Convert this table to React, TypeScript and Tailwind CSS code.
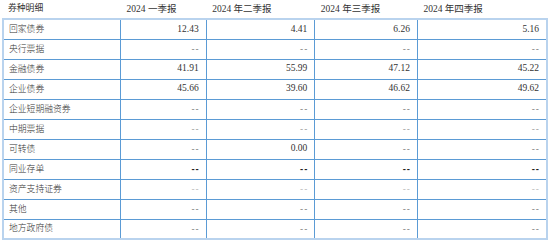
import React from 'react';

type Row = { name: string; vals: string[]; dash?: string };

const rows: Row[] = [
  { name: '回家债券', vals: ['12.43', '4.41', '6.26', '5.16'] },
  { name: '央行票据', vals: ['--', '--', '--', '--'], dash: 'text-[#7a7a7a]' },
  { name: '金融债券', vals: ['41.91', '55.99', '47.12', '45.22'] },
  { name: '企业债券', vals: ['45.66', '39.60', '46.62', '49.62'] },
  { name: '企业短期融资券', vals: ['--', '--', '--', '--'], dash: 'text-[#7a7a7a]' },
  { name: '中期票据', vals: ['--', '--', '--', '--'], dash: 'text-[#9a9a9a]' },
  { name: '可转债', vals: ['--', '0.00', '--', '--'], dash: 'text-[#7a7a7a]' },
  { name: '同业存单', vals: ['--', '--', '--', '--'], dash: 'text-[#222] font-bold' },
  { name: '资产支持证券', vals: ['--', '--', '--', '--'], dash: 'text-[#b8b8b8]' },
  { name: '其他', vals: ['--', '--', '--', '--'], dash: 'text-[#7a7a7a]' },
  { name: '地方政府债', vals: ['--', '--', '--', '--'], dash: 'text-[#7a7a7a]' },
];

const headers = ['2024 一季报', '2024 年二季报', '2024 年三季报', '2024 年四季报'];
const widths = ['w-[118px]', 'w-[86px]', 'w-[109px]', 'w-[103px]', 'w-[130px]'];

const cjk = "font-['Liberation_Serif','Noto_Sans_CJK_SC',serif]";

export default function App() {
  return (
    <div className="w-[550px] h-[240px] bg-white px-[2px] overflow-hidden">
      <table className={`table-fixed border-collapse text-[9.5px] text-[#333] ${cjk}`}>
        <thead>
          <tr className="h-[19px]">
            <th className={`${widths[0]} text-left font-normal pl-[5px] text-[8.8px]`}>券种明细</th>
            {headers.map((h, i) => (
              <th key={h} className={`${widths[i + 1]} text-left font-normal pl-[6px]`}>
                {h}
              </th>
            ))}
          </tr>
        </thead>
        <tbody className="border-2 border-[#b9d3ee]">
          {rows.map((r) => (
            <tr key={r.name} className="h-[20px] border-b border-[#5b9bd5]">
              <td className="pl-[5px] border-r border-[#5b9bd5] leading-none text-[8.8px] font-light">
                {r.name}
              </td>
              {r.vals.map((v, i) => (
                <td
                  key={i}
                  className={`text-right pr-[7px] leading-none ${
                    i < 3 ? 'border-r border-[#5b9bd5]' : ''
                  }`}
                >
                  {v === '--' ? (
                    <span
                      className={`tracking-[1px] -mr-[1px] font-['Liberation_Sans',sans-serif] ${r.dash ?? ''}`}
                    >
                      --
                    </span>
                  ) : (
                    v
                  )}
                </td>
              ))}
            </tr>
          ))}
        </tbody>
      </table>
    </div>
  );
}
